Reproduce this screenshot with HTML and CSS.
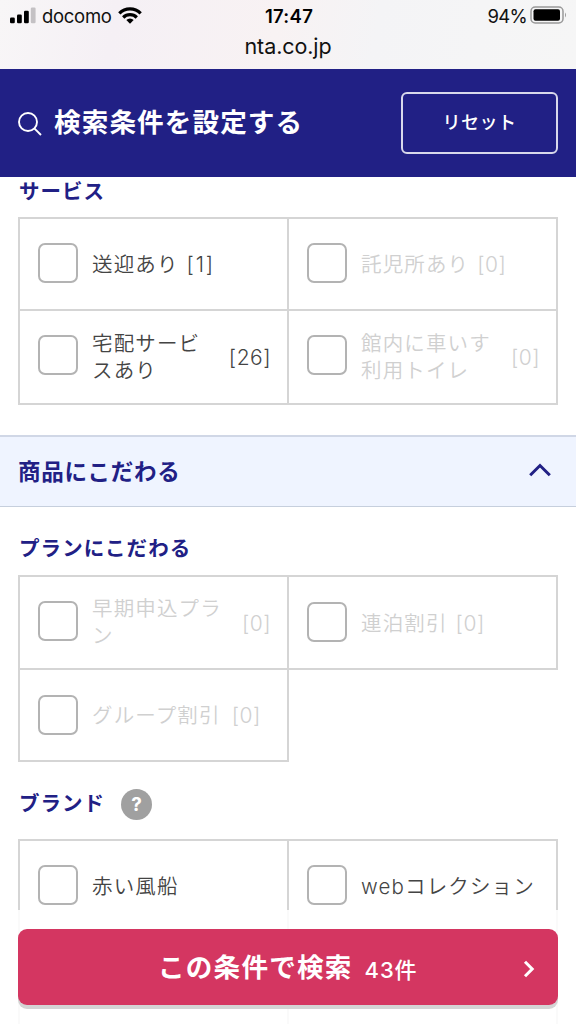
FILE: index.html
```html
<!DOCTYPE html>
<html lang="ja">
<head>
<meta charset="utf-8">
<title>検索条件を設定する</title>
<link rel="stylesheet" href="styles.css">
</head>
<body>
<div class="screen">
  <div class="browser-bar">
    <div class="status">
      <div class="carrier">
        <svg class="signal" width="26" height="17" viewBox="0 0 26 17"><rect x="0" y="10.5" width="4.800" height="5.800" rx="1.300"/><rect x="7" y="7.5" width="4.800" height="8.800" rx="1.300"/><rect x="14" y="3.800" width="4.800" height="12.500" rx="1.300"/><rect x="20.800" y="0.500" width="4.800" height="15.800" rx="1.300" fill="#c4c1c4"/></svg>
        <span class="carrier-name">docomo</span>
        <svg class="wifi" width="24" height="17" viewBox="0 0 24 17"><g fill="none" stroke="#000" stroke-width="3.200"><path d="M1.300 6.300a15.200 15.200 0 0 1 21.400 0"/><path d="M5.200 10.500a9.600 9.600 0 0 1 13.600 0"/></g><path d="M8.300 13.100a5.300 5.300 0 0 1 7.400 0L12 16.800z"/></svg>
      </div>
      <div class="clock">17:47</div>
      <div class="power">
        <span>94%</span>
        <svg width="38" height="18" viewBox="0 0 38 18"><rect x="1" y="1" width="32" height="16" rx="4.200" fill="none" stroke="#999" stroke-width="1.500"/><rect x="3.500" y="3.200" width="26.500" height="11.600" rx="2"/><path d="M35 6.500q2 2.500 0 5z" fill="#999"/></svg>
      </div>
    </div>
    <div class="address">nta.co.jp</div>
  </div>

  <header class="header">
    <svg class="search-icon" width="24" height="24" viewBox="0 0 24 24" fill="none" stroke="#fff" stroke-width="1.900"><circle cx="10" cy="10" r="9"/><path d="M16.300 16.300l6.700 6.700"/></svg>
    <h1 class="title">検索条件を設定する</h1>
    <button class="reset">リセット</button>
  </header>

  <main class="content">
    <h3 class="heading heading-service">サービス</h3>
    <div class="options">
      <label class="cell row-92"><span class="box"></span><span class="label">送迎あり</span><span class="count one">[1]</span></label>
      <label class="cell row-92 off"><span class="box"></span><span class="label">託児所あり</span><span class="count near">[0]</span></label>
      <label class="cell row-94"><span class="box high"></span><span class="label wide">宅配サービ<br>スあり</span><span class="count">[26]</span></label>
      <label class="cell row-94 off"><span class="box high"></span><span class="label wide">館内に車いす<br>利用トイレ</span><span class="count">[0]</span></label>
    </div>

    <div class="band">
      <h2 class="band-title">商品にこだわる</h2>
      <svg class="chevron" width="22" height="14" viewBox="0 0 22 14" fill="none" stroke="#212085" stroke-width="3"><path d="M1.200 12.300L11 2.500l9.800 9.800"/></svg>
    </div>

    <h3 class="heading heading-plan">プランにこだわる</h3>
    <div class="options">
      <label class="cell row-93 off"><span class="box high"></span><span class="label wide">早期申込プラ<br>ン</span><span class="count">[0]</span></label>
      <label class="cell row-93 off"><span class="box"></span><span class="label">連泊割引</span><span class="count near">[0]</span></label>
      <label class="cell row-92 off"><span class="box low"></span><span class="label">グループ割引</span><span class="count">[0]</span></label>
      <span class="filler"></span>
    </div>

    <div class="brand-head">
      <h3 class="heading heading-brand">ブランド</h3>
      <span class="help">?</span>
    </div>
    <div class="options">
      <label class="cell row-92"><span class="box"></span><span class="label">赤い風船</span></label>
      <label class="cell row-92"><span class="box"></span><span class="label">webコレクション</span></label>
      <span class="cell row-94"></span>
      <span class="cell row-94"></span>
    </div>
  </main>

  <footer class="dock">
    <button class="submit">
      <span class="submit-text">この条件で検索</span>
      <span class="submit-count">43件</span>
      <svg class="arrow" width="12" height="18" viewBox="0 0 12 18" fill="none" stroke="#fff" stroke-width="3"><path d="M2 1.800L9.200 9 2 16.200"/></svg>
    </button>
  </footer>
</div>
</body>
</html>
```

FILE: styles.css
```css
* { box-sizing: border-box; }
body {
  margin: 0;
  background: #fff;
  color: #444;
  font-family: Inter, "Noto Sans CJK JP", sans-serif;
}
h1, h2, h3 { margin: 0; }
button { font-family: inherit; color: #fff; }
svg { display: block; flex: none; }
.screen { position: relative; width: 576px; height: 1024px; overflow: hidden; }

.browser-bar {
  height: 69px;
  color: #111;
  background: linear-gradient(100deg, #f8f6f7 0%, #f5f0f5 20%, #f8f2f3 48%, #f4f4f6 65%, #f6f6f6 100%);
}
.status {
  display: grid;
  grid-template-columns: 1fr auto 1fr;
  align-items: center;
  height: 30px;
  padding: 0 8px 0 10px;
  font-size: 18.500px;
}
.carrier { display: flex; align-items: center; }
.carrier-name { margin-left: 6px; padding-top: 2px; letter-spacing: -0.3px; }
.wifi { margin-left: 6px; }
.clock { padding-top: 2px; font-weight: 600; font-size: 18.500px; letter-spacing: 0.3px; color: #000; }
.power { display: flex; align-items: center; justify-content: flex-end; gap: 3px; }
.power span { padding-top: 2px; letter-spacing: -0.7px; }
.address { text-align: center; font-size: 21.500px; line-height: 33px; letter-spacing: -0.1px; }

.header {
  display: flex;
  align-items: center;
  height: 107.500px;
  padding: 0 18px;
  background: #212085;
  color: #fff;
}
.search-icon { margin-top: 2px; }
.title { margin: -1px 0 0 12px; font-size: 26.600px; line-height: 40px; font-weight: 700; letter-spacing: 1.100px; white-space: nowrap; }
.reset {
  width: 157px;
  height: 62px;
  margin-left: auto;
  padding-bottom: 4px;
  border: 2px solid #d8d8eb;
  border-radius: 6px;
  background: none;
  font-size: 18px;
  font-weight: 500;
  letter-spacing: 0.5px;
}

.heading { padding-left: 19px; color: #212085; font-size: 20.500px; font-weight: 700; line-height: 30px; letter-spacing: 1px; }
.heading-service { padding-bottom: 10.500px; }
.heading-plan { padding: 27px 0 11px 19px; letter-spacing: 1.100px; }
.options {
  display: grid;
  grid-template-columns: 269px 269px;
  width: 540px;
  margin-left: 18px;
  padding: 2px 0 0 2px;
  background: linear-gradient(#d5d5d5, #d5d5d5) left / 2px 100% no-repeat, linear-gradient(#d5d5d5, #d5d5d5) top / 100% 2px no-repeat;
}
.cell {
  display: flex;
  align-items: center;
  padding: 1px 16px 0 18px;
  border-right: 2px solid #d5d5d5;
  border-bottom: 2px solid #d5d5d5;
  font-size: 20.500px;
  line-height: 27px;
}
.row-92 { height: 92px; }
.row-93 { height: 93px; }
.row-94 { height: 94px; }
.box { width: 40px; height: 40px; flex: none; margin-bottom: 3px; border: 2px solid #b3b3b3; border-radius: 7px; }
.high { margin-bottom: 5px; }
.low { margin-bottom: 1px; }
.label { margin-left: 14px; font-weight: 350; letter-spacing: 1.150px; white-space: nowrap; }
.wide { flex: 1; margin-top: -2px; }
.count { margin-left: 11px; font-size: 21px; letter-spacing: 0.500px; font-weight: 350; }
.near { margin-left: 8px; }
.one { margin-left: 8px; letter-spacing: 1.800px; }
.off { color: #d0d0d0; }

.band {
  display: flex;
  align-items: center;
  justify-content: space-between;
  height: 72px;
  margin-top: 30px;
  padding: 0 25px 0 18px;
  background: #eff4ff;
  border-top: 2px solid #d0d7e6;
  border-bottom: 1px solid #c6cfdd;
}
.band-title { color: #212085; font-size: 22.500px; line-height: 32px; letter-spacing: 0.800px; }
.chevron { margin-bottom: 4px; }
.brand-head { display: flex; align-items: center; height: 77px; padding-top: 7px; }
.help {
  width: 31px;
  height: 31px;
  margin-left: 16px;
  border-radius: 50%;
  background: #a0a0a0;
  color: #fff;
  font-size: 19px;
  font-weight: 700;
  line-height: 31px;
  text-align: center;
}

.dock {
  position: absolute;
  left: 0;
  top: 910px;
  width: 576px;
  height: 114px;
  padding: 19px 18px 0;
  background: rgba(255, 255, 255, 0.88);
}
.submit {
  display: flex;
  align-items: center;
  width: 540px;
  height: 76px;
  padding: 0 23px 4px 140px;
  border: 0;
  border-radius: 9px;
  background: #d43661;
  box-shadow: 0 4px 0 #d4d4d4;
}
.submit-text { font-size: 26.600px; font-weight: 700; letter-spacing: 1.200px; white-space: nowrap; }
.submit-count { margin: 6px 0 0 12px; font-size: 22px; font-weight: 500; letter-spacing: 0.900px; }
.arrow { margin: 7px 0 0 auto; }
```
